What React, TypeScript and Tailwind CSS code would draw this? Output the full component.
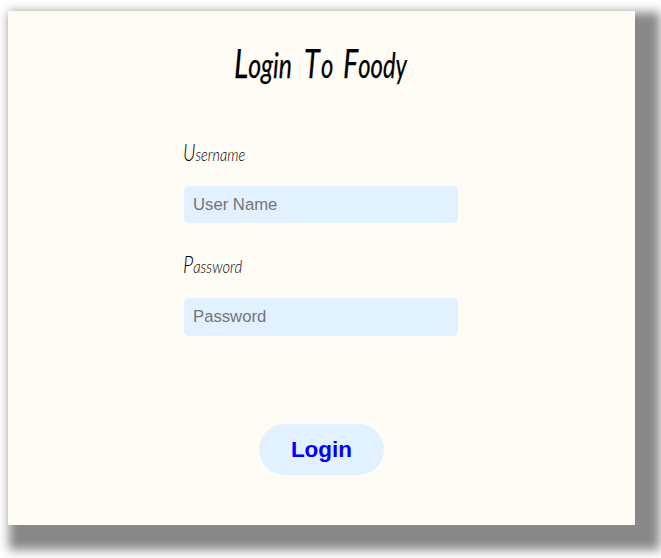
type WordProps = { initial: string; rest: string; className: string; capClass: string; fitClass: string };

function Word({ initial, rest, className, capClass, fitClass }: WordProps) {
  return (
    <span className={`block whitespace-nowrap ${className}`}>
      <span className={`inline-block origin-bottom-left ${fitClass}`}>
        <span className={capClass}>{initial}</span>
        {rest}
      </span>
    </span>
  );
}

type FieldProps = { id: string; initial: string; rest: string; type: string; placeholder: string; fitClass: string; inputClass: string };

function Field({ id, initial, rest, type, placeholder, fitClass, inputClass }: FieldProps) {
  return (
    <div className="flex flex-col gap-[18px]">
      <label htmlFor={id} className="flex h-8 font-['Lato'] text-[18px] leading-8 font-light text-black italic">
        <Word initial={initial} rest={rest} className="-ml-px" capClass="text-[23px]" fitClass={fitClass} />
      </label>
      <input
        id={id}
        type={type}
        placeholder={placeholder}
        className={`w-[274px] rounded-[5px] bg-[#e1f1ff] pr-[9px] pl-[9.5px] font-['Liberation_Sans',Arial,sans-serif] text-[16.7px] outline-none placeholder:text-[#757575] ${inputClass}`}
      />
    </div>
  );
}

export default function App() {
  return (
    <main className="h-[558px] overflow-hidden bg-white pt-[11px] pl-2">
      <form className="flex h-[514px] w-[627px] flex-col items-center bg-[#fffcf5] shadow-[13px_13px_10px_12px_#888]">
        <h1 className="mt-[22px] flex h-[60px] w-[175px] font-['Lato'] text-[34px] leading-[60px] font-normal text-black italic [-webkit-text-stroke:0.25px_black]">
          <Word initial="L" rest="ogin" className="w-[70px]" capClass="text-[41px]" fitClass="scale-x-[0.73]" />
          <Word initial="T" rest="o" className="w-[39px]" capClass="text-[41px] tracking-[2px]" fitClass="scale-x-[0.7]" />
          <Word initial="F" rest="oody" className="w-[66px]" capClass="text-[41px]" fitClass="scale-x-[0.7]" />
        </h1>
        <div className="mt-[43px] mr-[2px] flex w-[274px] flex-col gap-[25px]">
          <Field id="username" initial="U" rest="sername" type="text" placeholder="User Name" fitClass="scale-x-[0.8]" inputClass="h-[37px]" />
          <Field id="password" initial="P" rest="assword" type="password" placeholder="Password" fitClass="scale-x-[0.82]" inputClass="h-[38px]" />
        </div>
        <button type="button" className="mt-[88px] h-[51px] w-[125px] rounded-full bg-[#e1f1ff] font-['Liberation_Sans',Arial,sans-serif] text-[22.5px] font-bold text-[#0000ff]">
          Login
        </button>
      </form>
    </main>
  );
}
